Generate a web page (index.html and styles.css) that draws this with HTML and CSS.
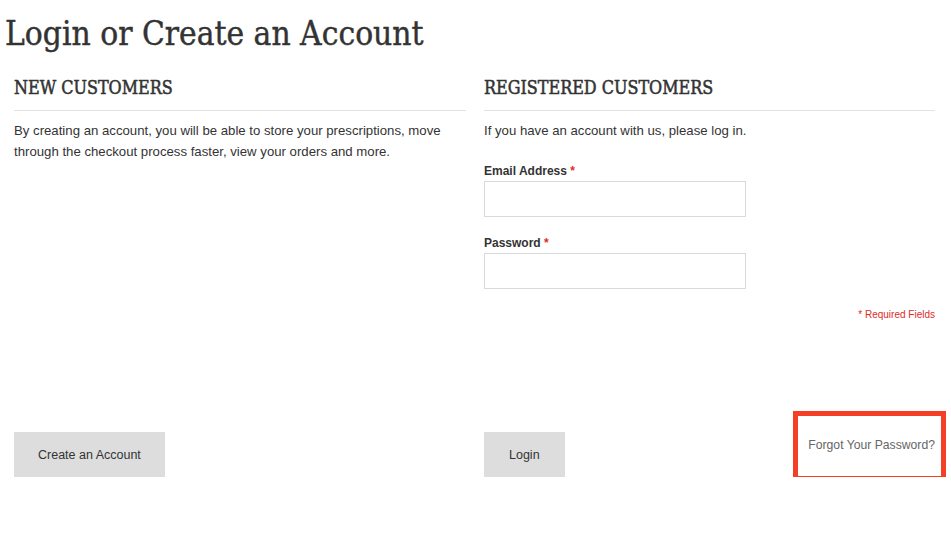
FILE: index.html
```html
<!DOCTYPE html>
<html lang="en">
<head>
<meta charset="utf-8">
<title>Login or Create an Account</title>
<link rel="stylesheet" href="styles.css">
</head>
<body>
<div class="page">
  <h1 class="page-title">Login or Create an Account</h1>
  <div class="account-login">
    <div class="col new-users">
      <h2 class="section-title">New Customers</h2>
      <p class="intro">By creating an account, you will be able to store your prescriptions, move through the checkout process faster, view your orders and more.</p>
    </div>
    <div class="col registered-users">
      <h2 class="section-title">Registered Customers</h2>
      <p class="intro">If you have an account with us, please log in.</p>
      <div class="field">
        <label class="field-label">Email Address <em>*</em></label>
        <input class="input-text" type="text">
      </div>
      <div class="field">
        <label class="field-label">Password <em>*</em></label>
        <input class="input-text" type="password">
      </div>
      <p class="required">* Required Fields</p>
    </div>
    <div class="buttons-set">
      <button class="button" type="button">Create an Account</button>
    </div>
    <div class="buttons-set">
      <button class="button button-login" type="button">Login</button>
      <a class="forgot" href="#">Forgot Your Password?</a>
    </div>
  </div>
</div>
</body>
</html>
```

FILE: styles.css
```css
html, body {
  margin: 0;
  padding: 0;
  background: #fff;
}
body {
  font-family: "Liberation Sans", Arial, sans-serif;
  color: #333;
  font-size: 13px;
}
.page {
  width: 951px;
}
.page-title {
  font-family: "DejaVu Serif", serif;
  font-stretch: condensed;
  font-weight: normal;
  font-size: 33.2px;
  line-height: 40px;
  color: #333;
  margin: 0;
  padding: 14px 0 0 5px;
  -webkit-text-stroke: 0.4px #333;
}
.account-login {
  display: grid;
  grid-template-columns: 452px 451px;
  column-gap: 18px;
  padding: 23px 16px 0 14px;
}
.section-title {
  font-family: "DejaVu Serif", serif;
  font-stretch: condensed;
  font-weight: normal;
  text-transform: uppercase;
  font-size: 17.8px;
  line-height: 22px;
  color: #333;
  margin: 0;
  padding-bottom: 11px;
  border-bottom: 1px solid #e2e2e2;
  -webkit-text-stroke: 0.5px #333;
}
.intro {
  margin: 9px 0 0;
  line-height: 21px;
  font-size: 13.2px;
}
.field {
  margin-top: 23px;
}
.field + .field {
  margin-top: 19px;
}
.field-label {
  display: block;
  font-weight: bold;
  font-size: 12px;
  line-height: 14px;
  margin-bottom: 3px;
}
.field-label em {
  font-style: normal;
  color: #df2a2a;
}
.input-text {
  display: block;
  box-sizing: border-box;
  width: 262px;
  height: 36px;
  border: 1px solid #d9d9d9;
  margin: 0;
  padding: 0 8px;
  font: inherit;
}
.required {
  margin: 20px 0 0;
  text-align: right;
  font-size: 10px;
  line-height: 12px;
  color: #df2a2a;
}
.buttons-set {
  display: flex;
  justify-content: space-between;
  align-items: flex-start;
  margin-top: 111px;
}
.button {
  height: 45px;
  border: 0;
  margin: 0;
  background: #dddddd;
  color: #333;
  font-family: "Liberation Sans", Arial, sans-serif;
  font-size: 12.5px;
  padding: 0 24px;
  cursor: pointer;
}
.button-login {
  padding: 0 25px;
}
.forgot {
  display: block;
  position: relative;
  margin-top: 6px;
  font-size: 12.2px;
  line-height: 14px;
  color: #666;
  text-decoration: none;
}
.forgot::after {
  content: "";
  position: absolute;
  top: -27px;
  bottom: -29px;
  left: -15px;
  right: -11px;
  border: 5px solid #f43f26;
}
```
